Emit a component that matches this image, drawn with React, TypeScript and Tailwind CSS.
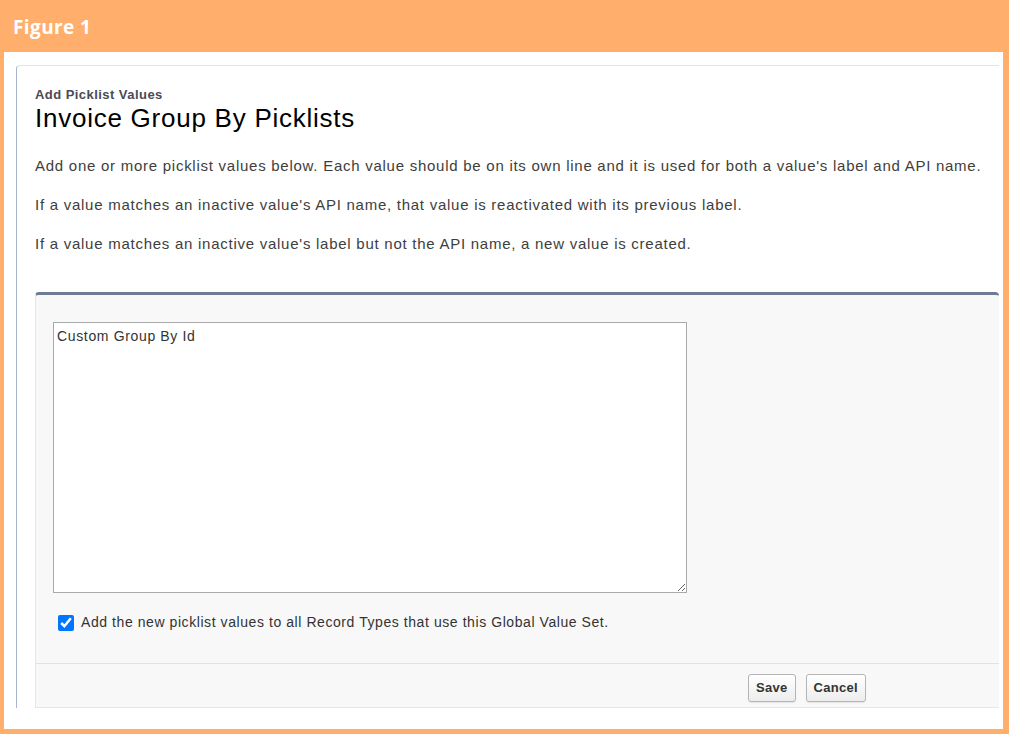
const PARAGRAPHS = [
  "Add one or more picklist values below. Each value should be on its own line and it is used for both a value's label and API name.",
  "If a value matches an inactive value's API name, that value is reactivated with its previous label.",
  "If a value matches an inactive value's label but not the API name, a new value is created.",
];

function Button({ label }: { label: string }) {
  return (
    <button
      type="button"
      className="h-[28px] rounded-[3px] border border-[#b5b5b5] bg-gradient-to-b from-white to-[#ededed] px-[7px] text-[13px] font-bold tracking-[0.3px] text-[#333] shadow-[0_1px_1px_rgba(0,0,0,0.08)]"
    >
      {label}
    </button>
  );
}

export default function App() {
  return (
    <div className="flex h-[734px] w-[1009px] flex-col bg-[#ffae6b] font-['Liberation_Sans',Arial,sans-serif]">
      <div className="flex h-[52px] items-center px-[13px] pt-[2px] font-['Open_Sans',sans-serif] text-[19px] font-bold tracking-[0.4px] text-white">
        Figure 1
      </div>

      <div className="mb-[5px] ml-[4px] mr-[6px] flex flex-1 flex-col bg-white pb-[21px] pl-[12px] pr-[4px] pt-[13px]">
        <div className="flex flex-1 flex-col rounded-tl-[4px] border-l border-t border-l-[#a7b6d0] border-t-[#e4e4e4] pl-[18px] pt-[22px]">
          <div className="text-[13px] font-bold leading-[14px] tracking-[0.45px] text-[#4a4a56]">Add Picklist Values</div>
          <h1 className="mt-[2px] text-[26px] leading-[28px] tracking-[0.75px] text-[#000]">Invoice Group By Picklists</h1>

          <div className="mt-[24px] flex flex-col gap-[20px] text-[15px] leading-[19px] tracking-[0.74px] text-[#3e3e3c]">
            {PARAGRAPHS.map((p) => (
              <p key={p}>{p}</p>
            ))}
          </div>

          <div className="mt-[39px] flex flex-1 flex-col rounded-t-[4px] border-t-[3px] border-l border-b border-t-[#6f7a94] border-l-[#e6e6e6] border-b-[#e6e6e6] bg-[#f8f8f8]">
            <div className="flex flex-col px-[17px] pt-[27px]">
              <textarea
                defaultValue="Custom Group By Id"
                className="h-[271px] w-[634px] resize border border-[#a9a9a9] bg-white px-[3px] pb-[2px] pt-[5px] text-[14px] leading-[17px] tracking-[0.65px] text-[#333] outline-none"
              />
              <label className="mt-[19px] flex items-center gap-[7px] pl-[5px] text-[14px] tracking-[0.57px] text-[#333]">
                <input type="checkbox" defaultChecked className="h-[16px] w-[16px] accent-[#0075ff]" />
                Add the new picklist values to all Record Types that use this Global Value Set.
              </label>
            </div>

            <div className="mt-[30px] flex h-[44px] items-start gap-[10px] border-t border-[#e2e2e2] pl-[712px] pt-[10px]">
              <Button label="Save" />
              <Button label="Cancel" />
            </div>
          </div>
        </div>
      </div>
    </div>
  );
}
